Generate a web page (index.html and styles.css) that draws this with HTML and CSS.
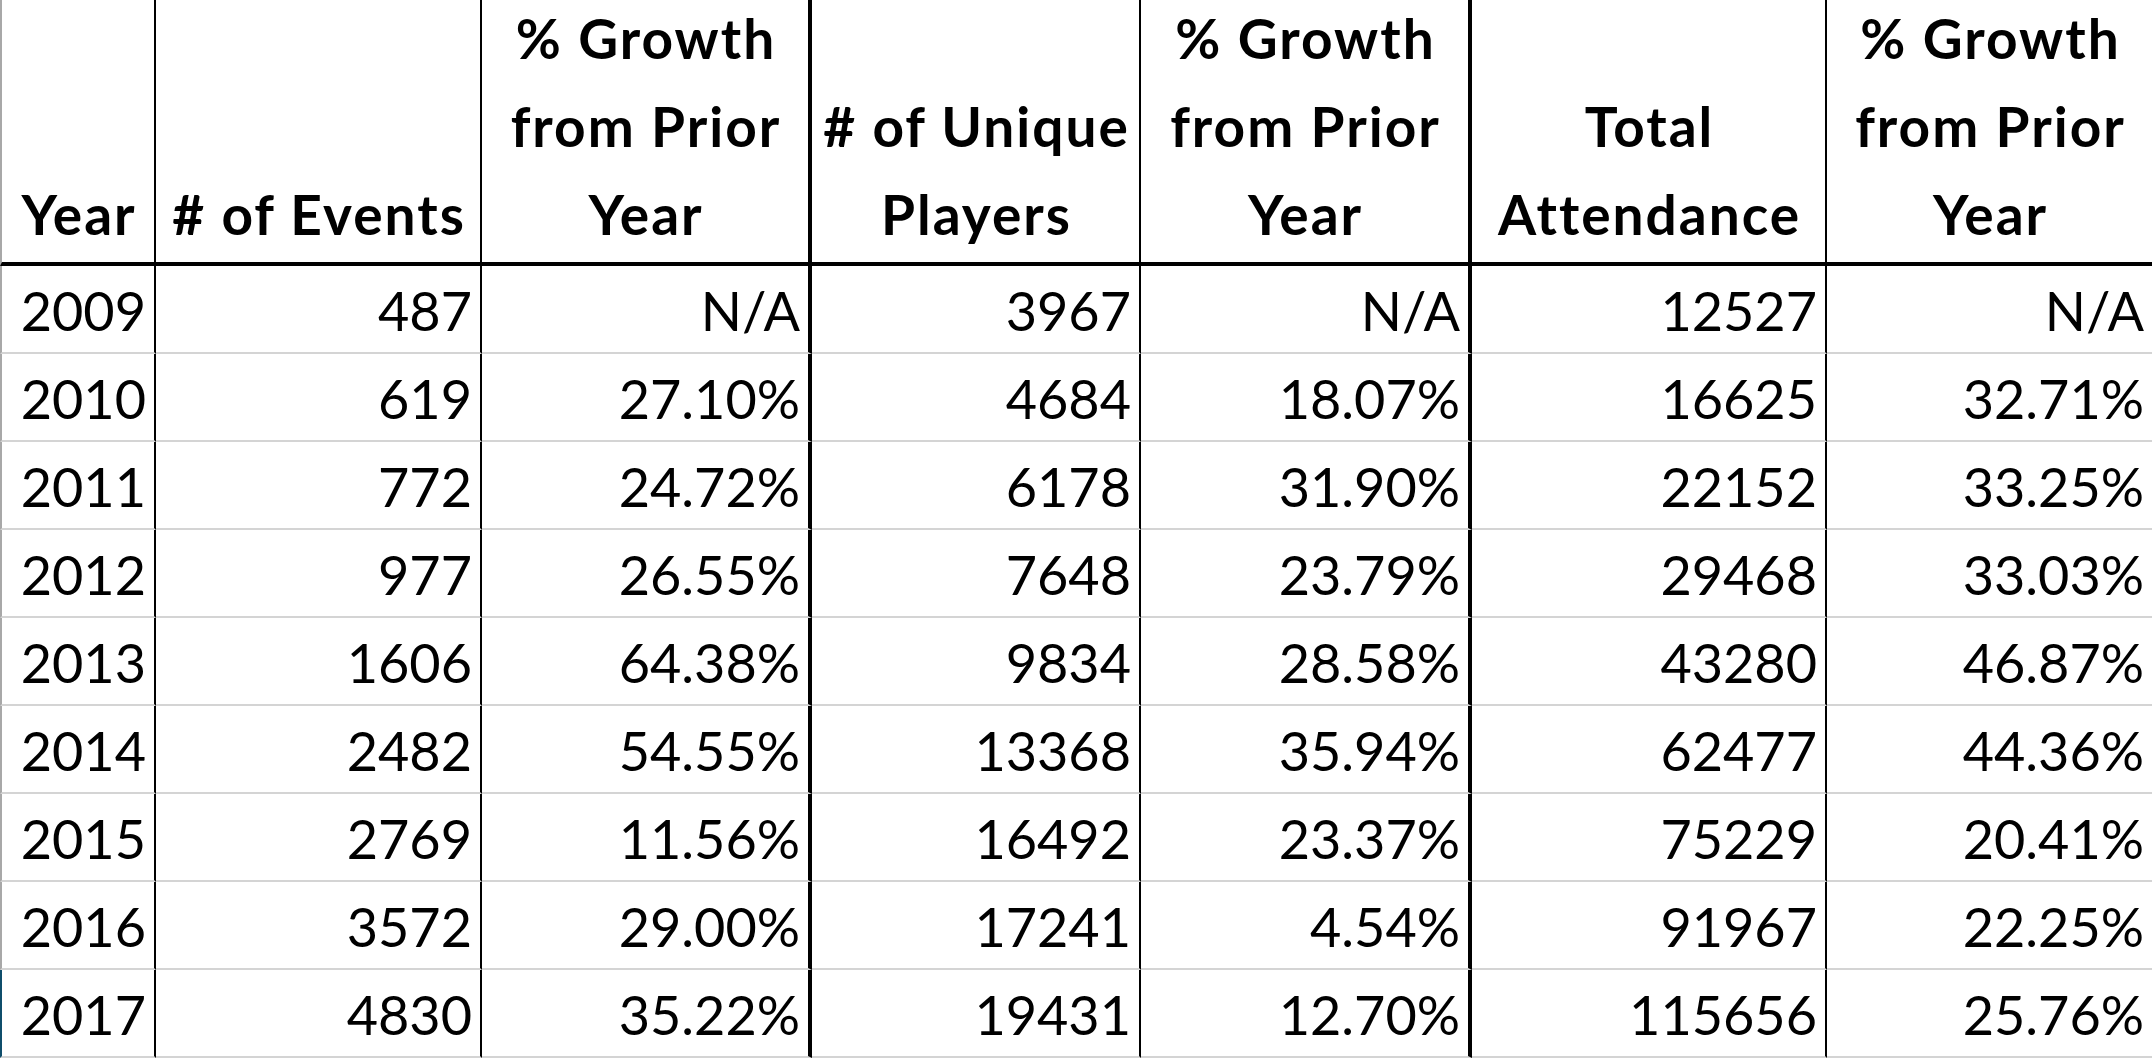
FILE: index.html
```html
<!DOCTYPE html>
<html>
<head>
<meta charset="utf-8">
<title>Event Growth</title>
<link rel="stylesheet" href="styles.css">
</head>
<body>
<div class="sheet">
  <div class="cell hd first thin">Year</div>
  <div class="cell hd thin"># of Events</div>
  <div class="cell hd thick">% Growth<br>from Prior<br>Year</div>
  <div class="cell hd thin"># of Unique<br>Players</div>
  <div class="cell hd thick">% Growth<br>from Prior<br>Year</div>
  <div class="cell hd thin">Total<br>Attendance</div>
  <div class="cell hd">% Growth<br>from Prior<br>Year</div>

  <div class="cell first thin">2009</div><div class="cell thin">487</div><div class="cell thick">N/A</div><div class="cell thin">3967</div><div class="cell thick">N/A</div><div class="cell thin">12527</div><div class="cell">N/A</div>
  <div class="cell first thin">2010</div><div class="cell thin">619</div><div class="cell thick">27.10%</div><div class="cell thin">4684</div><div class="cell thick">18.07%</div><div class="cell thin">16625</div><div class="cell">32.71%</div>
  <div class="cell first thin">2011</div><div class="cell thin">772</div><div class="cell thick">24.72%</div><div class="cell thin">6178</div><div class="cell thick">31.90%</div><div class="cell thin">22152</div><div class="cell">33.25%</div>
  <div class="cell first thin">2012</div><div class="cell thin">977</div><div class="cell thick">26.55%</div><div class="cell thin">7648</div><div class="cell thick">23.79%</div><div class="cell thin">29468</div><div class="cell">33.03%</div>
  <div class="cell first thin">2013</div><div class="cell thin">1606</div><div class="cell thick">64.38%</div><div class="cell thin">9834</div><div class="cell thick">28.58%</div><div class="cell thin">43280</div><div class="cell">46.87%</div>
  <div class="cell first thin">2014</div><div class="cell thin">2482</div><div class="cell thick">54.55%</div><div class="cell thin">13368</div><div class="cell thick">35.94%</div><div class="cell thin">62477</div><div class="cell">44.36%</div>
  <div class="cell first thin">2015</div><div class="cell thin">2769</div><div class="cell thick">11.56%</div><div class="cell thin">16492</div><div class="cell thick">23.37%</div><div class="cell thin">75229</div><div class="cell">20.41%</div>
  <div class="cell first thin">2016</div><div class="cell thin">3572</div><div class="cell thick">29.00%</div><div class="cell thin">17241</div><div class="cell thick">4.54%</div><div class="cell thin">91967</div><div class="cell">22.25%</div>
  <div class="cell first selected thin">2017</div><div class="cell thin">4830</div><div class="cell thick">35.22%</div><div class="cell thin">19431</div><div class="cell thick">12.70%</div><div class="cell thin">115656</div><div class="cell">25.76%</div>
</div>
</body>
</html>
```

FILE: styles.css
```css
html, body {
  margin: 0;
  padding: 0;
  background: #ffffff;
  overflow: hidden;
}

.sheet {
  display: grid;
  grid-template-columns: 156px 326px 330px 329px 331px 355px 325px;
  grid-template-rows: 266px repeat(9, 88px);
  width: 2152px;
  font-family: "Lato", "Noto Sans", sans-serif;
  font-size: 54px;
  color: #000000;
}

.cell {
  box-sizing: border-box;
  display: flex;
  align-items: flex-end;
  justify-content: flex-end;
  text-align: right;
  padding: 0 8px 14px 0;
  line-height: 54px;
  border-bottom: 2px solid #d4d4d4;
  white-space: nowrap;
}

.hd {
  font-weight: 700;
  font-size: 55px;
  letter-spacing: 2px;
  justify-content: center;
  text-align: center;
  padding: 0 0 4px 2px;
  line-height: 88px;
  border-bottom: 4px solid #000000;
}

.thin {
  border-right: 2px solid #000000;
}

.thick {
  border-right: 4px solid #000000;
}

.first {
  border-left: 2px solid #a8a8a8;
}

.selected {
  border-left-color: #0f4d6b;
}
```
